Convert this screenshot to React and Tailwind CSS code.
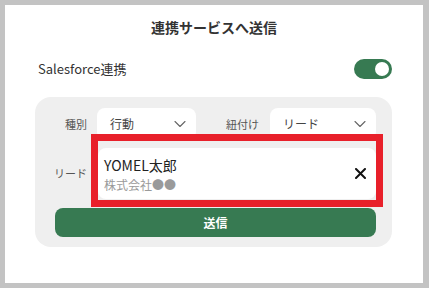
import React, { useState } from "react";

const FONT = { fontFamily: '"Noto Sans CJK JP", "Noto Sans", sans-serif' };

// Thin chevron used in the select boxes
const Chevron = () => (
  <svg width="12" height="8" viewBox="0 0 12 8" fill="none">
    <path d="M1 1.5L6 6.5L11 1.5" stroke="#666" strokeWidth="1.1" strokeLinecap="round" strokeLinejoin="round" />
  </svg>
);

const Select = ({ value, className }) => (
  <div
    className={`flex h-[32px] items-center justify-between rounded-lg bg-white pl-[13px] pr-[10px] text-[12px] text-[#444] ${className}`}
  >
    <span>{value}</span>
    <Chevron />
  </div>
);

const Label = ({ children, className = "" }) => (
  <span className={`shrink-0 whitespace-nowrap text-[11px] text-[#555] ${className}`}>{children}</span>
);

export default function App() {
  const [enabled, setEnabled] = useState(true);

  return (
    <div
      className="flex h-[288px] w-[429px] bg-[#c3c3c3] pb-[5px] pl-[5px] pr-[6px] pt-[5px]"
      style={FONT}
    >
      <div className="flex flex-1 flex-col bg-white">
        {/* Header */}
        <div className="flex h-[44px] items-center justify-center text-[14px] font-bold text-[#333]">
          連携サービスへ送信
        </div>

        {/* Salesforce toggle row */}
        <div className="flex h-[39px] items-center justify-between pl-[33px] pr-[31px]">
          <span className="text-[13px] text-[#333]">Salesforce連携</span>
          <button
            onClick={() => setEnabled(!enabled)}
            className={`flex h-[20px] w-[38px] items-center rounded-full px-[3px] ${
              enabled ? "justify-end bg-[#377a52]" : "justify-start bg-gray-300"
            }`}
          >
            <span className="h-[14px] w-[14px] rounded-full bg-white" />
          </button>
        </div>

        {/* Form card */}
        <div className="relative ml-[30px] mr-[31px] mt-[9px] flex flex-col rounded-2xl bg-[#efefef] pb-[10px] pl-[20px] pr-[16px] pt-[11px]">
          <div className="flex items-center">
            <div className="flex w-[32px] justify-end">
              <Label>種別</Label>
            </div>
            <Select value="行動" className="ml-[10px] w-[99px]" />
            <Label className="ml-[30px]">紐付け</Label>
            <Select value="リード" className="ml-[11px] flex-1" />
          </div>

          <div className="mt-[8px] flex items-center">
            <div className="flex w-[32px] justify-end">
              <Label>リード</Label>
            </div>
            <div className="ml-[11px] flex h-[51px] flex-1 items-center justify-between rounded-lg bg-white pl-[6px] pr-[10px]">
              <div className="flex flex-col">
                <span className="text-[14px] leading-[20px] text-[#222]">YOMEL太郎</span>
                <span className="mt-[2px] text-[12px] leading-[16px] text-[#9a9a9a]">株式会社●●</span>
              </div>
              <svg width="11" height="11" viewBox="0 0 11 11">
                <path d="M1 1L10 10M10 1L1 10" stroke="#111" strokeWidth="2" strokeLinecap="round" />
              </svg>
            </div>
          </div>

          <button className="mt-[9px] h-[29px] rounded-lg bg-[#377a52] text-[12px] font-bold text-white">
            送信
          </button>

          {/* Red highlight annotation */}
          <div className="pointer-events-none absolute left-[56px] top-[37px] h-[73px] w-[292px] border-[7px] border-[#e8202a]" />
        </div>
      </div>
    </div>
  );
}
